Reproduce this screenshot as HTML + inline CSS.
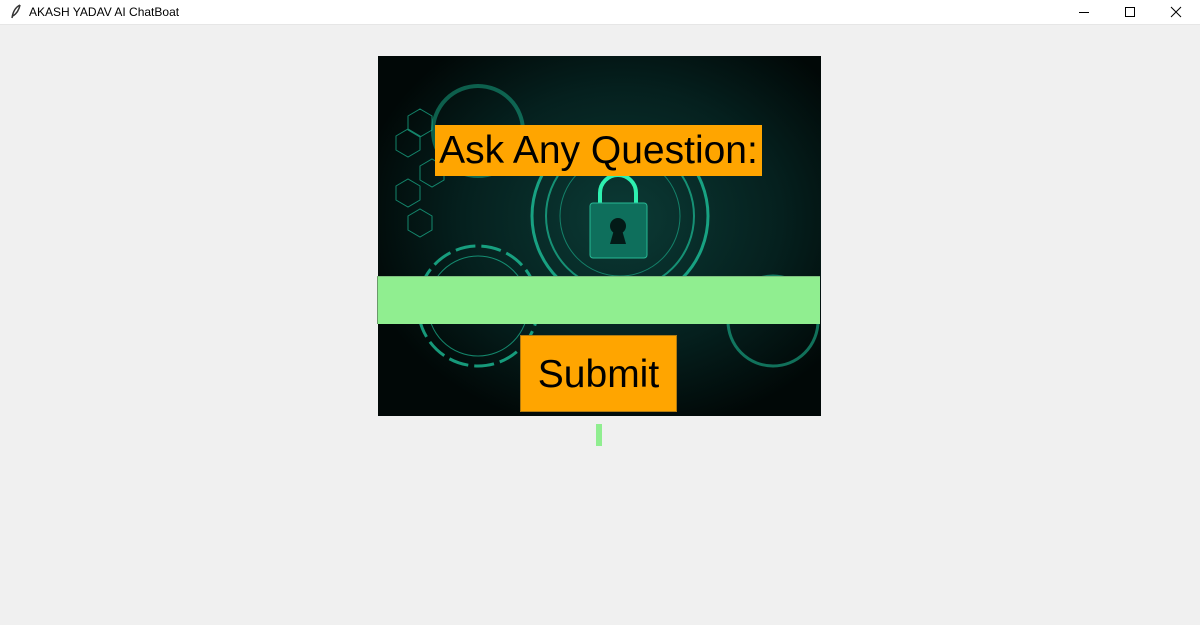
<!DOCTYPE html>
<html><head><meta charset="utf-8"><style>
*{margin:0;padding:0;box-sizing:border-box}
body{width:1200px;height:625px;background:#f0f0f0;position:relative;overflow:hidden;font-family:"Liberation Sans",sans-serif}
.tb{position:absolute;left:0;top:0;width:1200px;height:25px;background:#fff;border-bottom:1px solid #e6e6e6}
.tb .t{position:absolute;left:29px;top:5px;font-size:12px;color:#000}
.abs{position:absolute}
</style></head><body>
<div class="tb">
<svg class="abs" style="left:10px;top:4px" width="12" height="16" viewBox="0 0 12 16"><path d="M10 1 C6 3 3 7 2 14 M10 1 C9 6 6 10 3 12" stroke="#333" stroke-width="1.5" fill="none"/></svg>
<div class="t">AKASH YADAV AI ChatBoat</div>
<svg class="abs" style="left:1079px;top:4px" width="110" height="16">
<line x1="0" y1="8.5" x2="10" y2="8.5" stroke="#000"/>
<rect x="46.5" y="3.5" width="9" height="9" fill="none" stroke="#000"/>
<path d="M92 3 L102 13 M102 3 L92 13" stroke="#000"/>
</svg>
</div>
<svg class="abs" style="left:378px;top:56px" width="443" height="360" viewBox="0 0 443 360">
<defs><radialGradient id="g" cx="0.55" cy="0.45" r="0.6"><stop offset="0" stop-color="#0b3a35"/><stop offset="0.6" stop-color="#05201e"/><stop offset="1" stop-color="#010807"/></radialGradient></defs>
<rect width="443" height="360" fill="url(#g)"/>
<g fill="none" stroke="#1fd4a8">
<circle cx="242" cy="160" r="88" stroke-width="3" opacity=".7"/>
<circle cx="242" cy="160" r="74" stroke-width="2" opacity=".6"/>
<circle cx="242" cy="160" r="60" stroke-width="1" opacity=".5"/>
<circle cx="100" cy="250" r="60" stroke-width="3" opacity=".7" stroke-dasharray="20 6"/>
<circle cx="100" cy="250" r="50" stroke-width="1" opacity=".6"/>
<circle cx="100" cy="75" r="45" stroke-width="4" opacity=".4"/>
<circle cx="395" cy="265" r="45" stroke-width="3" opacity=".5"/>
<path d="M30 60 l12 -7 l12 7 v14 l-12 7 l-12 -7z M18 80 l12 -7 l12 7 v14 l-12 7 l-12 -7z M42 110 l12 -7 l12 7 v14 l-12 7 l-12 -7z M18 130 l12 -7 l12 7 v14 l-12 7 l-12 -7z M30 160 l12 -7 l12 7 v14 l-12 7 l-12 -7z" stroke-width="1" opacity=".6"/>
</g>
<path d="M222 147 v-10 a18 18 0 0 1 36 0 v10" stroke="#2ef0b0" stroke-width="4" fill="none"/>
<rect x="212" y="147" width="57" height="55" rx="3" fill="#0e6f5c" stroke="#27b894"/>
<circle cx="240" cy="170" r="8" fill="#031a17"/><path d="M236 174 L232 188 H248 L244 174z" fill="#031a17"/>
</svg>
<div class="abs" style="left:435px;top:125px;width:327px;height:51px;background:#ffa500;font-size:39px;line-height:51px;text-align:center;color:#000">Ask Any Question:</div>
<div class="abs" style="left:377px;top:276px;width:443px;height:48px;background:#90ee90;border-left:1px solid #6a9a6a;border-top:1px solid #7fbf7f"></div>
<div class="abs" style="left:520px;top:335px;width:157px;height:77px;background:#ffa500;border:1px solid #b07a10;font-size:39px;line-height:77px;text-align:center;color:#000">Submit</div>
<div class="abs" style="left:596px;top:424px;width:6px;height:22px;background:#90ee90"></div>
</body></html>
